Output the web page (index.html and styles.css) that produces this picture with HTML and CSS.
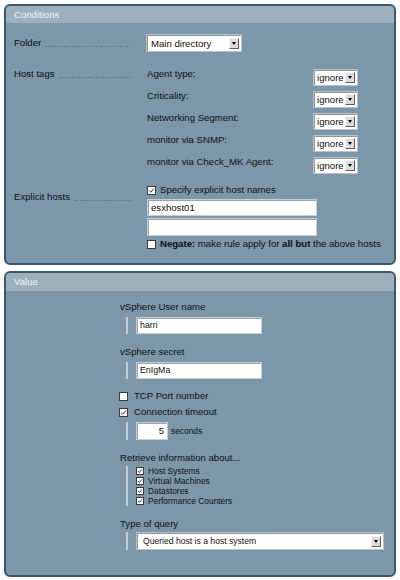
FILE: index.html
```html
<!DOCTYPE html>
<html>
<head>
<meta charset="utf-8">
<link rel="stylesheet" href="styles.css">
</head>
<body>
<div class="page">
  <section class="box box-cond">
    <div class="box-head">Conditions</div>
    <div class="cond-body">
      <div class="crow row-folder">
        <div class="clabel"><span class="ltxt">Folder</span><span class="dots"></span></div>
        <div class="cval">
          <div class="select sel-folder"><span class="sel-text">Main directory</span><span class="sel-btn"><i></i></span></div>
        </div>
      </div>
      <div class="crow row-tags">
        <div class="clabel lh12"><span class="ltxt">Host tags</span><span class="dots"></span></div>
        <div class="cval">
          <div class="tag"><span class="tag-name">Agent type:</span><div class="select sel-tag"><span class="sel-text">ignore</span><span class="sel-btn"><i></i></span></div></div>
          <div class="tag"><span class="tag-name">Criticality:</span><div class="select sel-tag"><span class="sel-text">ignore</span><span class="sel-btn"><i></i></span></div></div>
          <div class="tag"><span class="tag-name">Networking Segment:</span><div class="select sel-tag"><span class="sel-text">ignore</span><span class="sel-btn"><i></i></span></div></div>
          <div class="tag"><span class="tag-name">monitor via SNMP:</span><div class="select sel-tag"><span class="sel-text">ignore</span><span class="sel-btn"><i></i></span></div></div>
          <div class="tag"><span class="tag-name">monitor via Check_MK Agent:</span><div class="select sel-tag"><span class="sel-text">ignore</span><span class="sel-btn"><i></i></span></div></div>
        </div>
      </div>
      <div class="crow row-explicit">
        <div class="clabel lh12 lbl-explicit"><span class="ltxt">Explicit hosts</span><span class="dots"></span></div>
        <div class="cval">
          <div class="cbline spec"><span class="cb checked"><svg viewBox="0 0 7 7" width="7" height="7"><path d="M1.2 3.6 L2.8 5.2 L5.8 1.6" fill="none" stroke="#222" stroke-width="1"/></svg></span><span>Specify explicit host names</span></div>
          <div class="input in-host">esxhost01</div>
          <div class="input in-host in-second"></div>
          <div class="cbline negate"><span class="cb"></span><span><b>Negate:</b> make rule apply for <b>all but</b> the above hosts</span></div>
        </div>
      </div>
    </div>
  </section>

  <section class="box box-value">
    <div class="box-head">Value</div>
    <div class="val-body">
      <div class="vtitle">vSphere User name</div>
      <div class="field f-user"><span class="bar"></span><div class="input in-val">harri</div></div>
      <div class="vtitle t-secret">vSphere secret</div>
      <div class="field f-secret"><span class="bar"></span><div class="input in-val">EnIgMa</div></div>
      <div class="cbline vcb tcp"><span class="cb"></span><span>TCP Port number</span></div>
      <div class="cbline vcb conn"><span class="cb checked"><svg viewBox="0 0 7 7" width="7" height="7"><path d="M1.2 3.6 L2.8 5.2 L5.8 1.6" fill="none" stroke="#222" stroke-width="1"/></svg></span><span>Connection timeout</span></div>
      <div class="field f-timeout"><span class="bar"></span><div class="input in-num">5</div><span class="unit">seconds</span></div>
      <div class="vtitle t-retrieve">Retrieve information about...</div>
      <div class="field f-list">
        <span class="bar"></span>
        <div class="slist">
          <div class="sitem"><span class="scb"><svg viewBox="0 0 6 6" width="6" height="6"><path d="M1 3.1 L2.4 4.5 L5 1.3" fill="none" stroke="#222" stroke-width="0.9"/></svg></span><span>Host Systems</span></div>
          <div class="sitem"><span class="scb"><svg viewBox="0 0 6 6" width="6" height="6"><path d="M1 3.1 L2.4 4.5 L5 1.3" fill="none" stroke="#222" stroke-width="0.9"/></svg></span><span>Virtual Machines</span></div>
          <div class="sitem"><span class="scb"><svg viewBox="0 0 6 6" width="6" height="6"><path d="M1 3.1 L2.4 4.5 L5 1.3" fill="none" stroke="#222" stroke-width="0.9"/></svg></span><span>Datastores</span></div>
          <div class="sitem"><span class="scb"><svg viewBox="0 0 6 6" width="6" height="6"><path d="M1 3.1 L2.4 4.5 L5 1.3" fill="none" stroke="#222" stroke-width="0.9"/></svg></span><span>Performance Counters</span></div>
        </div>
      </div>
      <div class="vtitle t-query">Type of query</div>
      <div class="field f-query"><span class="bar"></span><div class="select sel-query"><span class="sel-text">Queried host is a host system</span><span class="sel-btn"><i></i></span></div></div>
    </div>
  </section>
</div>
</body>
</html>
```

FILE: styles.css
```css
* { box-sizing: border-box; }
html, body { margin: 0; padding: 0; background: #ffffff; }
body {
  font-family: "Liberation Sans", Arial, sans-serif;
  font-size: 9.6px;
  color: #111;
}
.page {
  padding: 4px 4px 0 4px;
  display: flex;
  flex-direction: column;
  gap: 6px;
}
.box {
  border: 2px solid #3a586e;
  border-radius: 6px;
  background: #7b97a9;
  overflow: hidden;
}
.box-cond { height: 261px; }
.box-value { height: 306px; }
.box-head {
  height: 17px;
  line-height: 17px;
  background: #9cb1bd;
  color: #eef3f6;
  padding-left: 8px;
}
.box-value .box-head { height: 18px; line-height: 18px; }

/* Conditions */
.cond-body { padding: 11px 0 0 8px; }
.crow {
  display: grid;
  grid-template-columns: 118px 1fr;
  column-gap: 15px;
}
.clabel {
  display: flex;
  line-height: 18px;
  white-space: nowrap;
}
.clabel.lh12 { line-height: 12px; }
.ltxt { flex: none; padding-right: 5px; }
.dots {
  flex: 1;
  align-self: flex-start;
  height: 18px;
  background-image: linear-gradient(to right, #4a5f6e 1px, transparent 1px);
  background-size: 2.4px 1px;
  background-repeat: repeat-x;
  background-position: 0 12px;
}
.lh12 .dots { height: 12px; background-position: 0 9px; }
.row-folder { height: 18px; margin-bottom: 16px; }
.tag {
  display: flex;
  height: 22px;
  line-height: 12px;
}
.tag-name { width: 166px; flex: none; }

.select {
  display: flex;
  align-items: center;
  justify-content: space-between;
  background: #fff;
  border: 1px solid #b9c0c6;
  box-shadow: inset 1px 1px 0 #8d979e;
  padding: 0 2px 0 4px;
  white-space: nowrap;
}
.sel-folder { width: 96px; height: 18px; margin-left: -1px; }
.sel-tag { width: 45px; height: 17px; margin-top: 1px; padding-left: 3px; }
.sel-query { width: 248px; height: 18px; padding-left: 6px; }
.sel-btn {
  width: 10px;
  height: 11px;
  flex: none;
  background: #dcdcdc;
  border: 1px solid;
  border-color: #f4f4f4 #5e5e5e #5e5e5e #f4f4f4;
  display: flex;
  align-items: center;
  justify-content: center;
}
.sel-btn i {
  display: block;
  width: 0;
  height: 0;
  border-left: 2.5px solid transparent;
  border-right: 2.5px solid transparent;
  border-top: 3px solid #000;
}

.lbl-explicit { padding-top: 7px; }
.row-explicit { padding-top: 6px; }
.cbline {
  display: flex;
  align-items: center;
  height: 12px;
  line-height: 12px;
  white-space: nowrap;
}
.cb {
  width: 9px;
  height: 9px;
  flex: none;
  background: #fff;
  border: 1px solid #3c3c3c;
  margin-right: 4px;
  display: flex;
  align-items: center;
  justify-content: center;
}
.input {
  background: #fff;
  border: 1px solid #c6ccd1;
  box-shadow: inset 1px 1px 0 #9aa3aa;
  padding-left: 3px;
  white-space: nowrap;
}
.in-host { width: 170px; height: 17px; line-height: 15px; margin-top: 3px; font-size: 9.6px; }
.in-second { height: 18px; margin-top: 2px; }
.negate { margin-top: 2px; }

/* Value */
.val-body { padding: 10px 0 0 114px; }
.vtitle { line-height: 12px; height: 12px; white-space: nowrap; }
.field { display: flex; margin-left: 6px; }
.bar {
  width: 2px;
  flex: none;
  background: #c3ccd2;
  margin-right: 8px;
  align-self: stretch;
}
.f-user, .f-secret { margin-top: 4px; }
.in-val { width: 126px; height: 17px; line-height: 15px; font-size: 8.8px; }
.t-secret { margin-top: 12px; }
.tcp { margin-top: 11px; margin-left: -1px; }
.conn { margin-top: 4px; margin-left: -1px; }
.vcb .cb { margin-right: 6px; }
.f-timeout { margin-top: 4px; align-items: center; }
.in-num {
  width: 32px;
  height: 18px;
  line-height: 16px;
  text-align: right;
  padding-right: 3px;
  font-size: 9.6px;
}
.unit { font-size: 8.4px; margin-left: 3px; }
.t-retrieve { margin-top: 12px; }
.f-list { margin-top: 2px; }
.slist { display: flex; flex-direction: column; }
.sitem {
  display: flex;
  align-items: center;
  height: 10px;
  line-height: 10px;
  font-size: 8.4px;
  white-space: nowrap;
}
.scb {
  width: 8px;
  height: 8px;
  flex: none;
  background: #fff;
  border: 1px solid #3c3c3c;
  margin-right: 4px;
  display: flex;
  align-items: center;
  justify-content: center;
}
.t-query { margin-top: 12px; }
.f-query { margin-top: 2px; }
.sel-query .sel-text { font-size: 8.6px; }
```
